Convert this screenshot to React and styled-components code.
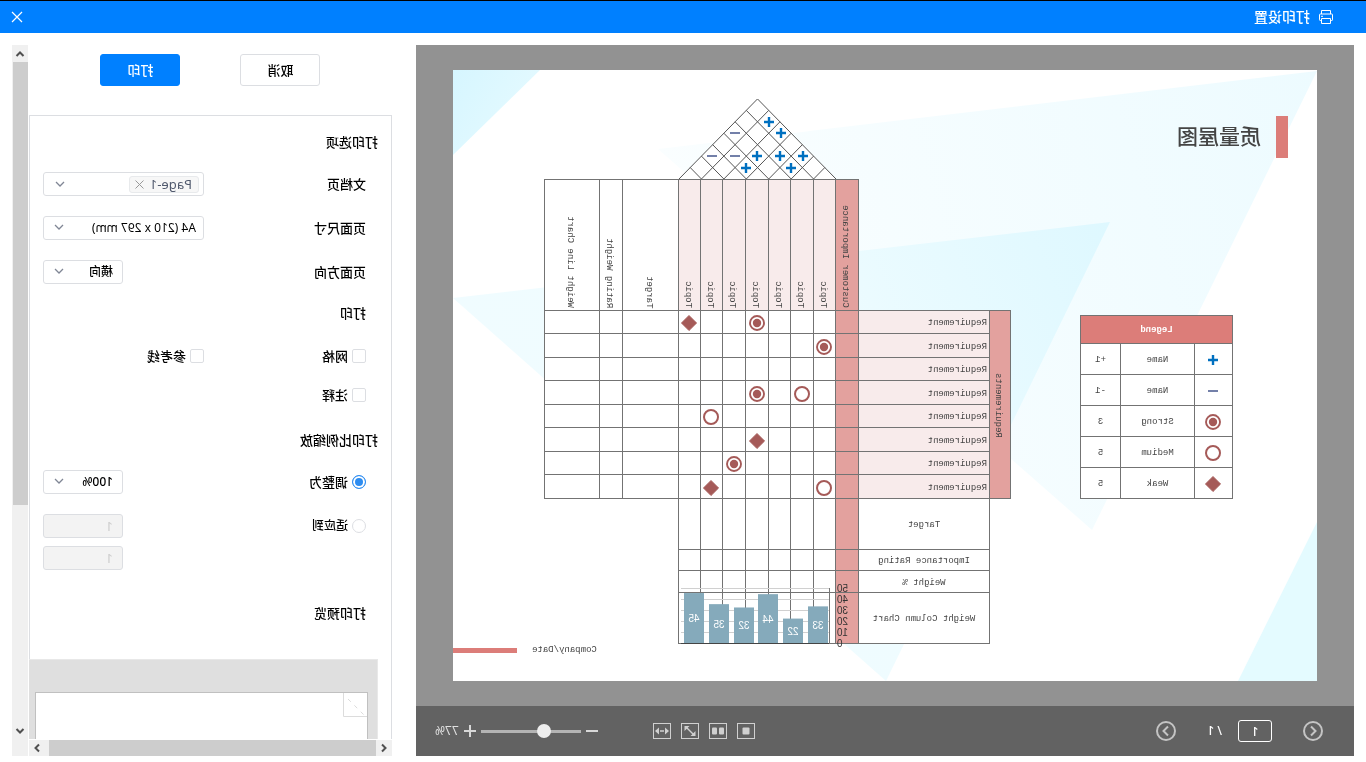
import React, { useState } from "react";
import styled, { createGlobalStyle, css } from "styled-components";

const topics = [0, 1, 2, 3, 4, 5, 6];

// one entry per requirement: topic index -> mark
const requirements = [
  { 3: "strong", 6: "weak" },
  { 0: "strong" },
  {},
  { 1: "medium", 3: "strong" },
  { 5: "medium" },
  { 3: "weak" },
  { 4: "strong" },
  { 0: "medium", 5: "weak" },
];

const summary = [
  { label: "Target", height: 51 },
  { label: "Importance Rating", height: 21 },
  { label: "Weight %", height: 22 },
  { label: "Weight Column Chart", height: 51 },
];

const legend = [
  { mark: "plus", name: "Name", value: "+1" },
  { mark: "minus", name: "Name", value: "-1" },
  { mark: "strong", name: "Strong", value: "3" },
  { mark: "medium", name: "Medium", value: "5" },
  { mark: "weak", name: "Weak", value: "5" },
];

const weights = [33, 22, 44, 32, 35, 45];

const roofMarks = [
  { type: "plus", x: 67, y: 23 },
  { type: "plus", x: 55, y: 34 },
  { type: "minus", x: 101, y: 34 },
  { type: "plus", x: 33, y: 57 },
  { type: "plus", x: 56, y: 57 },
  { type: "plus", x: 79, y: 57 },
  { type: "minus", x: 101, y: 57 },
  { type: "minus", x: 124, y: 57 },
  { type: "plus", x: 45, y: 69 },
  { type: "plus", x: 90, y: 69 },
];

const MarkShape = ({ type }) => {
  switch (type) {
    case "plus":
      return <path d="M-5 0H5M0 -5V5" stroke="#0070c0" strokeWidth="2.4" />;
    case "minus":
      return <path d="M-5 0H5" stroke="#7380a9" strokeWidth="2" />;
    case "strong":
      return (
        <>
          <circle r="7" fill="#fff" stroke="#a55a58" strokeWidth="1.9" />
          <circle r="4.2" fill="#a55a58" />
        </>
      );
    case "medium":
      return <circle r="7" fill="#fff" stroke="#a55a58" strokeWidth="2" />;
    default:
      return (
        <path
          d="M0 -7.6L7.6 0L0 7.6L-7.6 0Z"
          fill="#a55a58"
          stroke="#a55a58"
          strokeWidth="0.8"
          strokeLinejoin="round"
        />
      );
  }
};

const Mark = ({ type }) => (
  <MarkIcon viewBox="-9 -9 18 18">
    <MarkShape type={type} />
  </MarkIcon>
);

const Roof = () => {
  const lines = [];
  for (let i = 0; i <= 7; i++) {
    const x = (157 / 7) * i;
    const right = (157 - x) / 2;
    const left = x / 2;
    lines.push(`M${x} 80L${x + right} ${80 - right * 1.02}`);
    lines.push(`M${x} 80L${x - left} ${80 - left * 1.02}`);
  }
  return (
    <RoofDrawing viewBox="0 0 158 81">
      <path d="M0 80L78.5 0L157 80Z" fill="#fff" />
      <path d={lines.join("")} fill="none" stroke="#555" strokeWidth="1" />
      {roofMarks.map((mark, i) => (
        <g key={i} transform={`translate(${mark.x} ${mark.y})`}>
          <MarkShape type={mark.type} />
        </g>
      ))}
    </RoofDrawing>
  );
};

const ColumnChart = () => (
  <ChartDrawing viewBox="0 0 170 68">
    {[0, 10, 20, 30, 40, 50].map((tick) => (
      <g key={tick}>
        <path
          d={`M18 ${61.5 - tick * 1.1}H167`}
          stroke={tick ? "#d0d0d0" : "#444"}
        />
        <text x="11" y={65 - tick * 1.1} textAnchor="end" fill="#333">
          {tick}
        </text>
      </g>
    ))}
    <path d="M18.5 6V62" stroke="#777" />
    {weights.map((weight, i) => {
      const height = weight * 1.11;
      const x = 20 + Math.round(i * 24.8);
      return (
        <g key={i}>
          <rect x={x} y={61 - height} width="20" height={height} fill="#85aabb" />
          <text x={x + 10} y={65 - height / 2} textAnchor="middle" fill="#fff">
            {weight}
          </text>
        </g>
      );
    })}
  </ChartDrawing>
);

const Backdrop = () => (
  <BackdropDrawing viewBox="0 0 864 611">
    <defs>
      <linearGradient id="wide" x1="0" y1="0" x2="1" y2="0.2">
        <stop offset="0" stopColor="#edfbff" />
        <stop offset="1" stopColor="#fafeff" />
      </linearGradient>
      <linearGradient id="deep" x1="0" y1="0" x2="1" y2="0.3">
        <stop offset="0" stopColor="#def8ff" />
        <stop offset="0.5" stopColor="#effcff" />
        <stop offset="1" stopColor="#f0fcff" />
      </linearGradient>
      <linearGradient id="corner" x1="1" y1="0" x2="0" y2="0.6">
        <stop offset="0" stopColor="#d6f6ff" />
        <stop offset="1" stopColor="#e6faff" />
      </linearGradient>
    </defs>
    <path d="M0 1L659 79L225 460Z" fill="url(#wide)" />
    <path d="M207 152L864 228L431 611Z" fill="url(#deep)" />
    <path d="M777 0H864V85Z" fill="url(#corner)" />
    <path d="M0 452L79 611H0Z" fill="#e4fbff" />
  </BackdropDrawing>
);

const Matrix = () => (
  <MatrixTable>
    <colgroup>
      {[21, 131, 23, 22, 23, 22, 23, 23, 22, 22, 56, 23, 55].map((w, i) => (
        <col key={i} width={w} />
      ))}
    </colgroup>
    <tbody>
      <MatrixRow $height={131}>
        <Blank colSpan={2} />
        <HeadCell $tone="strong">
          <Upright>Customer Importance</Upright>
        </HeadCell>
        {topics.map((t) => (
          <HeadCell key={t} $tone="soft">
            <Upright>Topic</Upright>
          </HeadCell>
        ))}
        {["Target", "Rating Weight", "Weight Line Chart"].map((name) => (
          <HeadCell key={name}>
            <Upright>{name}</Upright>
          </HeadCell>
        ))}
      </MatrixRow>
      {requirements.map((marks, i) => (
        <MatrixRow key={i} $height={i % 2 ? 24 : 23}>
          {i === 0 && (
            <SideCell rowSpan={8}>
              <Upright>Requirements</Upright>
            </SideCell>
          )}
          <NameCell>Requirement</NameCell>
          <Cell $tone="strong" />
          {topics.map((t) => (
            <Cell key={t}>{marks[t] && <Mark type={marks[t]} />}</Cell>
          ))}
          <Cell />
          <Cell />
          <Cell />
        </MatrixRow>
      ))}
      {summary.map((row) => (
        <MatrixRow key={row.label} $height={row.height}>
          <Blank />
          <Cell>{row.label}</Cell>
          <Cell $tone="strong" />
          {topics.map((t) => (
            <Cell key={t} />
          ))}
          <Blank colSpan={3} />
        </MatrixRow>
      ))}
    </tbody>
  </MatrixTable>
);

const Legend = () => (
  <LegendTable>
    <colgroup>
      <col width="38" />
      <col width="74" />
      <col width="40" />
    </colgroup>
    <thead>
      <tr>
        <LegendTitle colSpan={3}>Legend</LegendTitle>
      </tr>
    </thead>
    <tbody>
      {legend.map((row) => (
        <MatrixRow key={row.mark} $height={31}>
          <Cell>
            <Mark type={row.mark} />
          </Cell>
          <Cell>{row.name}</Cell>
          <Cell>{row.value}</Cell>
        </MatrixRow>
      ))}
    </tbody>
  </LegendTable>
);

const Chevron = () => (
  <ChevronIcon viewBox="0 0 10 10">
    <path d="M1 3L5 7L9 3" fill="none" stroke="#808695" strokeWidth="1.3" />
  </ChevronIcon>
);

const Arrow = ({ turn }) => (
  <svg width="16" height="16" viewBox="-8 -8 16 16">
    <path
      d="M-3.5 2L0 -1.5L3.5 2"
      transform={`rotate(${turn})`}
      fill="none"
      stroke="#505050"
      strokeWidth="2"
    />
  </svg>
);

const App = () => {
  const [fit, setFit] = useState("scale");
  const [zoom, setZoom] = useState(35);

  return (
    <>
      <GlobalStyle />
      <Screen>
        <TitleBar>
          <svg width="16" height="16" viewBox="0 0 16 16" fill="none" stroke="#fff">
            <path d="M3.5 5V1.5H12.5V5" />
            <path d="M3.5 11.5H2.2Q1.5 11.5 1.5 10.8V5.7Q1.5 5 2.2 5H13.8Q14.5 5 14.5 5.7V10.8Q14.5 11.5 13.8 11.5H12.5" />
            <path d="M3.5 9.5H12.5V14.5H3.5ZM11 7.3H13" />
          </svg>
          <Title>打印设置</Title>
          <CloseButton aria-label="关闭">
            <svg width="12" height="12" viewBox="0 0 12 12" stroke="#fff" strokeWidth="1.2">
              <path d="M1 1L11 11M11 1L1 11" />
            </svg>
          </CloseButton>
        </TitleBar>

        <Body>
          <Preview>
            <Stage>
              <Sheet>
                <Backdrop />
                <SheetTitle>质量屋图</SheetTitle>
                <Roof />
                <Matrix />
                <ColumnChart />
                <Legend />
                <SheetFooter>Company/Date</SheetFooter>
              </Sheet>
            </Stage>
            <Toolbar>
              <RoundButton aria-label="上一页">
                <svg viewBox="0 0 20 20">
                  <circle cx="10" cy="10" r="9" />
                  <path d="M12 5.5L7.5 10L12 14.5" />
                </svg>
              </RoundButton>
              <PageInput aria-label="页码" defaultValue="1" />
              <PageTotal>/ 1</PageTotal>
              <RoundButton aria-label="下一页">
                <svg viewBox="0 0 20 20">
                  <circle cx="10" cy="10" r="9" />
                  <path d="M8 5.5L12.5 10L8 14.5" />
                </svg>
              </RoundButton>
              <ViewModes>
                <ViewButton aria-label="单页">
                  <svg viewBox="0 0 18 16">
                    <rect x="5.5" y="4.5" width="7" height="7" rx="1" />
                  </svg>
                </ViewButton>
                <ViewButton aria-label="双页">
                  <svg viewBox="0 0 18 16">
                    <rect x="3" y="4.5" width="5" height="7" rx="1" />
                    <rect x="10" y="4.5" width="5" height="7" rx="1" />
                  </svg>
                </ViewButton>
                <ViewButton aria-label="适合页面">
                  <svg viewBox="0 0 18 16">
                    <path d="M14.5 3V8L9.5 3ZM3.5 13V8L8.5 13Z" />
                    <path d="M12.5 4.5L5.5 11.5" stroke="#d0d0d0" strokeWidth="1.4" />
                  </svg>
                </ViewButton>
                <ViewButton aria-label="适合宽度">
                  <svg viewBox="0 0 18 16">
                    <path d="M2 8L6 4.5V11.5ZM16 8L12 4.5V11.5ZM7 7.2H11V8.8H7Z" />
                  </svg>
                </ViewButton>
              </ViewModes>
              <ZoomButton aria-label="缩小">
                <svg viewBox="0 0 12 12">
                  <path d="M0 6H12" />
                </svg>
              </ZoomButton>
              <ZoomSlider
                type="range"
                aria-label="缩放"
                value={zoom}
                onChange={(e) => setZoom(Number(e.target.value))}
              />
              <ZoomButton aria-label="放大">
                <svg viewBox="0 0 12 12">
                  <path d="M0 6H12M6 0V12" />
                </svg>
              </ZoomButton>
              <ZoomValue>77%</ZoomValue>
            </Toolbar>
          </Preview>

          <Side>
            <SideMain>
              <SideContent>
                <Actions>
                  <Button>取消</Button>
                  <Button $primary>打印</Button>
                </Actions>
                <Options>
                  <Heading>打印选项</Heading>
                  <Row>
                    <span id="pages">文档页</span>
                    <TagBox role="group" aria-labelledby="pages">
                      <Tag>
                        Page-1
                        <TagClose aria-label="移除">
                          <svg width="9" height="9" viewBox="0 0 9 9" stroke="#999">
                            <path d="M0.5 0.5L8.5 8.5M8.5 0.5L0.5 8.5" />
                          </svg>
                        </TagClose>
                      </Tag>
                      <Chevron />
                    </TagBox>
                  </Row>
                  <Row>
                    <label htmlFor="size">页面尺寸</label>
                    <SelectBox $wide>
                      <select id="size">
                        <option>A4 (210 x 297 mm)</option>
                      </select>
                      <Chevron />
                    </SelectBox>
                  </Row>
                  <Row>
                    <label htmlFor="orientation">页面方向</label>
                    <SelectBox>
                      <select id="orientation">
                        <option>横向</option>
                      </select>
                      <Chevron />
                    </SelectBox>
                  </Row>
                  <SubHeading>打印</SubHeading>
                  <CheckGrid>
                    <CheckLabel>
                      <Check type="checkbox" />
                      网格
                    </CheckLabel>
                    <CheckLabel>
                      <Check type="checkbox" />
                      参考线
                    </CheckLabel>
                    <CheckLabel>
                      <Check type="checkbox" />
                      注释
                    </CheckLabel>
                  </CheckGrid>
                  <Heading>打印比例缩放</Heading>
                  <Row>
                    <CheckLabel>
                      <Radio
                        type="radio"
                        name="fit"
                        checked={fit === "scale"}
                        onChange={() => setFit("scale")}
                      />
                      调整为
                    </CheckLabel>
                    <SelectBox>
                      <select aria-label="比例">
                        <option>100%</option>
                      </select>
                      <Chevron />
                    </SelectBox>
                  </Row>
                  <Row>
                    <CheckLabel $small>
                      <Radio
                        type="radio"
                        name="fit"
                        checked={fit === "pages"}
                        onChange={() => setFit("pages")}
                      />
                      适应到
                    </CheckLabel>
                    <NumberInput aria-label="横向页数" value="1" disabled />
                  </Row>
                  <TightRow>
                    <NumberInput aria-label="纵向页数" value="1" disabled />
                  </TightRow>
                  <PreviewHeading>打印预览</PreviewHeading>
                  <Thumb>
                    <ThumbPage>
                      <Fold width="24" height="24" viewBox="0 0 24 24">
                        <path d="M0 23.5H23.5V0" />
                        <path d="M19 6L1 24" strokeDasharray="4 5" />
                      </Fold>
                    </ThumbPage>
                  </Thumb>
                </Options>
              </SideContent>
              <ScrollX>
                <Arrow turn={-90} />
                <ThumbX />
                <Arrow turn={90} />
              </ScrollX>
            </SideMain>
            <ScrollY>
              <Arrow turn={0} />
              <TrackY>
                <ThumbY />
              </TrackY>
              <Arrow turn={180} />
            </ScrollY>
          </Side>
        </Body>
      </Screen>
    </>
  );
};

export default App;

const GlobalStyle = createGlobalStyle`
  * {
    box-sizing: border-box;
  }
  body {
    margin: 0;
    background: #fff;
    overflow: hidden;
  }
  svg {
    display: block;
    flex: none;
  }
  button, input, select {
    font: inherit;
    color: inherit;
  }
  button {
    border: 0;
    padding: 0;
    background: none;
    cursor: pointer;
  }
`;

// the whole screen is flipped left to right
const Screen = styled.div`
  display: flex;
  flex-direction: column;
  height: 100vh;
  transform: scaleX(-1);
  border-top: 1px solid #000;
  font-family: "Noto Sans", "Noto Sans CJK SC", sans-serif;
  font-size: 13px;
  font-weight: 500;
  line-height: 20px;
  color: #000;
`;

const TitleBar = styled.header`
  display: flex;
  align-items: center;
  gap: 8px;
  height: 32px;
  flex: none;
  padding: 0 11px 0 32px;
  background: #0080ff;
  color: #fff;
`;

const Title = styled.h1`
  margin: 0;
  font-size: 14px;
  font-weight: 500;
`;

const CloseButton = styled.button`
  margin-left: auto;
`;

const Body = styled.main`
  display: flex;
  flex: 1;
  min-height: 0;
  gap: 24px;
  padding: 12px 12px 6px;
`;

const Preview = styled.section`
  display: flex;
  flex-direction: column;
  flex: 1;
  min-width: 0;
  background: #929292;
`;

const Stage = styled.div`
  display: flex;
  flex: 1;
  justify-content: center;
  align-items: center;
  min-height: 0;
  overflow: hidden;
`;

// the sheet is a free canvas, its shapes keep their own places
const Sheet = styled.div`
  position: relative;
  flex: none;
  width: 864px;
  height: 611px;
  background: #fff;
  color: #444;
  font-family: "Liberation Mono", monospace;
  font-size: 9px;
  font-weight: 400;
  line-height: 12px;
`;

const BackdropDrawing = styled.svg`
  position: absolute;
  inset: 0;
  width: 100%;
  height: 100%;
`;

const SheetTitle = styled.h2`
  position: absolute;
  left: 29px;
  top: 46px;
  margin: 0;
  padding: 0 0 4px 15px;
  border-left: 12px solid #dc7d79;
  font-family: "Noto Sans CJK SC", sans-serif;
  font-size: 21px;
  font-weight: 500;
  line-height: 38px;
`;

const SheetFooter = styled.div`
  position: absolute;
  right: 0;
  bottom: 25px;
  display: flex;
  align-items: center;
  gap: 15px;

  &::after {
    content: "";
    width: 64px;
    height: 5px;
    background: #dc7d79;
  }
`;

const RoofDrawing = styled.svg`
  position: absolute;
  left: 481px;
  top: 29px;
  width: 158px;
  height: 81px;
`;

const ChartDrawing = styled.svg`
  position: absolute;
  left: 469px;
  top: 512px;
  width: 170px;
  height: 68px;
  font-family: "Liberation Sans", sans-serif;
  font-size: 10px;
`;

const tableBase = css`
  position: absolute;
  border-collapse: collapse;
  table-layout: fixed;
`;

const MatrixTable = styled.table`
  ${tableBase}
  left: 306px;
  top: 109px;
  width: 467px;
`;

const LegendTable = styled.table`
  ${tableBase}
  left: 84px;
  top: 245px;
  width: 153px;
`;

const MatrixRow = styled.tr`
  height: ${(props) => props.$height}px;
`;

const Blank = styled.td`
  padding: 0;
`;

const tones = { strong: "#e3a19e", soft: "#f8ebeb" };

const Cell = styled.td`
  padding: 2px 0 0;
  border: 1px solid #737373;
  background: ${(props) => tones[props.$tone] || "#fff"};
  text-align: center;
`;

const HeadCell = styled(Cell)`
  padding: 0 0 2px 3px;
  vertical-align: bottom;
`;

const NameCell = styled(Cell)`
  padding-left: 2px;
  background: ${tones.soft};
  text-align: left;
`;

const SideCell = styled(Cell)`
  padding-left: 3px;
  background: ${tones.strong};
`;

const LegendTitle = styled.th`
  height: 28px;
  padding: 0;
  border: 1px solid #737373;
  background: #dc7d79;
  color: #fff;
`;

const Upright = styled.span`
  display: inline-block;
  vertical-align: bottom;
  writing-mode: vertical-rl;
  transform: rotate(180deg);
  white-space: nowrap;
`;

const MarkIcon = styled.svg`
  width: 18px;
  height: 18px;
  margin: 0 auto;
`;

const Toolbar = styled.footer`
  display: flex;
  align-items: center;
  flex: none;
  height: 50px;
  padding: 0 19px 0 31px;
  background: #626262;
  color: #fff;
  font-size: 12px;
`;

const RoundButton = styled.button`
  svg {
    width: 20px;
    height: 20px;
    fill: none;
    stroke: #c4c4c4;
    stroke-width: 2;
  }
`;

const PageInput = styled.input`
  width: 34px;
  height: 22px;
  margin: 0 16px 0 31px;
  padding: 0;
  border: 1px solid #fff;
  border-radius: 3px;
  background: none;
  text-align: center;
`;

const PageTotal = styled.span`
  width: 46px;
  white-space: pre;
`;

const ViewModes = styled.div`
  display: flex;
  gap: 10px;
  margin: 0 55px 0 auto;
`;

const ViewButton = styled.button`
  width: 18px;
  height: 16px;
  border: 1px solid #d0d0d0;

  svg {
    width: 18px;
    height: 16px;
    margin: -1px;
    fill: #d0d0d0;
  }
`;

const ZoomButton = styled.button`
  svg {
    width: 12px;
    height: 12px;
    stroke: #d8d8d8;
    stroke-width: 2;
  }
`;

const ZoomSlider = styled.input`
  appearance: none;
  width: 100px;
  height: 14px;
  margin: 0 5px;
  background: linear-gradient(#b4b4b4, #b4b4b4) center / 100% 3px no-repeat;

  &::-webkit-slider-thumb {
    appearance: none;
    width: 14px;
    height: 14px;
    border-radius: 50%;
    background: #eee;
  }
`;

const ZoomValue = styled.span`
  margin-left: 5px;
  color: #e0e0e0;
  font-weight: 400;
`;

const Side = styled.aside`
  display: flex;
  flex: none;
  gap: 1px;
  width: 380px;
`;

const SideMain = styled.div`
  display: flex;
  flex-direction: column;
  flex: 1;
  gap: 1px;
  min-width: 0;
`;

const SideContent = styled.div`
  display: flex;
  flex-direction: column;
  flex: 1;
  min-height: 0;
  overflow: hidden;
`;

const Actions = styled.div`
  display: flex;
  justify-content: center;
  gap: 60px;
  flex: none;
  padding: 9px 0 29px;
`;

const Button = styled.button`
  width: 80px;
  height: 32px;
  border: 1px solid ${(props) => (props.$primary ? "#0080ff" : "#dcdee2")};
  border-radius: 3px;
  background: ${(props) => (props.$primary ? "#0080ff" : "#fff")};
  color: ${(props) => (props.$primary ? "#fff" : "#000")};
`;

const Options = styled.div`
  display: flex;
  flex-direction: column;
  flex: none;
  padding: 16px 13px 0;
  border: 1px solid #dcdee2;
`;

const Heading = styled.h3`
  margin: 0;
  font-size: 13px;
  font-weight: 500;
`;

const SubHeading = styled(Heading)`
  margin: 19px 0 0 12px;
`;

const PreviewHeading = styled(Heading)`
  margin: 33px 0 36px 12px;
`;

const Row = styled.div`
  display: flex;
  justify-content: space-between;
  align-items: center;
  height: 24px;
  margin: 20px 0 0 12px;
`;

const TightRow = styled(Row)`
  justify-content: flex-end;
  margin-top: 8px;
`;

const fieldBox = css`
  border: 1px solid #dcdee2;
  border-radius: 3px;
  background: #fff;
`;

const SelectBox = styled.div`
  position: relative;
  width: ${(props) => (props.$wide ? 161 : 80)}px;
  height: 24px;

  select {
    ${fieldBox}
    appearance: none;
    width: 100%;
    height: 24px;
    padding: 0 30px 0 ${(props) => (props.$wide ? 7 : 9)}px;
    font-size: 12px;
    font-weight: ${(props) => (props.$wide ? 400 : 500)};
  }
`;

const ChevronIcon = styled.svg`
  position: absolute;
  top: 6px;
  right: 11px;
  width: 10px;
  height: 10px;
  pointer-events: none;
`;

const TagBox = styled.div`
  ${fieldBox}
  position: relative;
  display: flex;
  align-items: center;
  width: 161px;
  height: 24px;
  padding-left: 4px;
`;

const Tag = styled.span`
  display: flex;
  align-items: center;
  justify-content: space-between;
  width: 70px;
  height: 17px;
  padding: 0 5px 0 6px;
  border: 1px solid #e8eaec;
  border-radius: 3px;
  background: #f7f7f7;
  color: #515a6e;
  font-weight: 400;
`;

const TagClose = styled.button`
  display: flex;
`;

const CheckGrid = styled.div`
  display: grid;
  grid-template-columns: 162px 1fr;
  row-gap: 15px;
  margin: 21px 0 23px 12px;
`;

const CheckLabel = styled.label`
  display: flex;
  align-items: center;
  gap: 4px;
  height: 24px;
  font-size: ${(props) => (props.$small ? 12 : 13)}px;
`;

const Check = styled.input`
  appearance: none;
  width: 14px;
  height: 14px;
  margin: 0;
  border: 1px solid #dcdee2;
  border-radius: 2px;
  background: #fff;
`;

const Radio = styled(Check)`
  border-radius: 50%;

  &:checked {
    border-color: #2d8cf0;
    background: #2d8cf0;
    box-shadow: inset 0 0 0 2px #fff;
  }
`;

const NumberInput = styled.input`
  ${fieldBox}
  width: 80px;
  height: 24px;
  padding: 0 9px;
  background: #f3f3f3;
  color: #ccc;
  font-weight: 400;
`;

const Thumb = styled.div`
  width: 370px;
  height: 300px;
  padding: 32px 9px 0;
  border: 1px solid #e8e8e8;
  background: #dfdfdf;
`;

const ThumbPage = styled.div`
  width: 333px;
  height: 260px;
  border: 1px solid #c0c0c0;
  background: #fff;
`;

const Fold = styled.svg`
  fill: none;
  stroke: #dcdcdc;
`;

const scrollTrack = css`
  display: flex;
  flex: none;
  background: #f0f0f0;
`;

const ScrollX = styled.div`
  ${scrollTrack}
  height: 16px;
`;

const ThumbX = styled.div`
  flex: 1;
  margin-right: 4px;
  background: #cdcdcd;
`;

const ScrollY = styled.div`
  ${scrollTrack}
  flex-direction: column;
  width: 16px;
  padding: 1px 0 17px;
`;

const TrackY = styled.div`
  flex: 1;
`;

const ThumbY = styled.div`
  width: 15px;
  height: 67%;
  background: #cdcdcd;
`;
